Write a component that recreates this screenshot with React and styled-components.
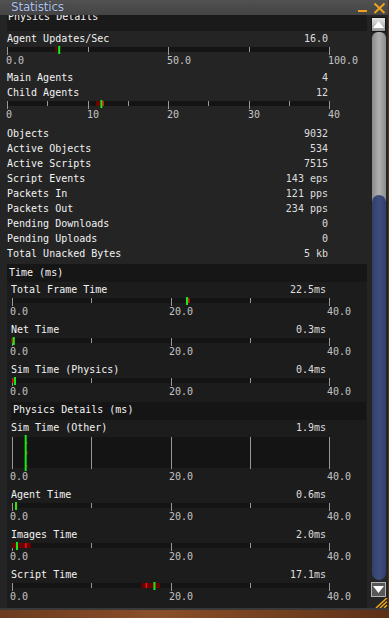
import React from 'react';
import styled, { createGlobalStyle } from 'styled-components';

const GlobalStyle = createGlobalStyle`
  html, body {
    margin: 0;
    padding: 0;
  }
  body {
    width: 389px;
    height: 618px;
    overflow: hidden;
    background: linear-gradient(90deg, #6b3b1f, #8a4e2a 40%, #74401f 70%, #5e3018);
    font-family: 'DejaVu Sans Mono', 'Liberation Mono', monospace;
    font-size: 10px;
    color: #f0f0f0;
  }
`;

// layout of a stat bar, depends on the section it sits in
const topLayout = { labelLeft: 0, graphLeft: 0, width: 322, valueRight: 39, shift: -1, gap: 3 };
const timeLayout = { labelLeft: 4, graphLeft: 5, width: 317, valueRight: 41, shift: -2, gap: 4 };

const timeScale = { max: 40, step: 10, major: 20, labels: [0, 20, 40], fmt: (v) => v.toFixed(1) };

const counters = [
  ['Objects', '9032'],
  ['Active Objects', '534'],
  ['Active Scripts', '7515'],
  ['Script Events', '143 eps'],
  ['Packets In', '121 pps'],
  ['Packets Out', '234 pps'],
  ['Pending Downloads', '0'],
  ['Pending Uploads', '0'],
  ['Total Unacked Bytes', '5 kb'],
];

const timeStats = [
  { label: 'Total Frame Time', value: '22.5ms', mean: 22.2, cur: 21.95 },
  { label: 'Net Time', value: '0.3ms', mean: -0.05, cur: 0.1 },
  { label: 'Sim Time (Physics)', value: '0.4ms', mean: 0, cur: 0.25 },
];

const physicsStats = [
  { label: 'Agent Time', value: '0.6ms', range: [0.63, 0.76], cur: 0.38 },
  { label: 'Images Time', value: '2.0ms', range: [0, 2.4], mean: 1.65, cur: 0.5 },
  { label: 'Script Time', value: '17.1ms', range: [16.35, 18.7], mean: 16.85, cur: 17.85 },
];

const Window = styled.div`
  width: 388px;
  height: 610px;
  box-sizing: border-box;
  background: #242424;
  border-bottom: 2px solid #393939;
  display: flex;
  flex-direction: column;
`;

const TitleBar = styled.div`
  height: 15px;
  flex: none;
  display: flex;
  align-items: center;
  justify-content: space-between;
  padding: 0 1px 0 11px;
  background: linear-gradient(#515151, #444);
  position: relative;
  z-index: 1;
`;

const Title = styled.div`
  font-family: 'DejaVu Sans', sans-serif;
  font-size: 12px;
  letter-spacing: -0.2px;
  line-height: 15px;
  color: #b0c3ef;
  text-shadow: 0 0 1px #1a1a1a;
`;

const Controls = styled.svg`
  display: block;
`;

const Body = styled.div`
  flex: 1;
  display: flex;
  min-height: 0;
`;

const Viewport = styled.div`
  flex: 1;
  overflow: hidden;
`;

const Content = styled.div`
  margin-top: -3px;
  padding: 0 1px 0 7px;
`;

const Band = styled.div`
  height: ${(p) => p.$h}px;
  line-height: ${(p) => p.$lh}px;
  padding-left: ${(p) => p.$pad}px;
  margin: ${(p) => p.$margin || '0'};
  background: ${(p) => p.$bg || '#1a1a1a'};
  color: #f4f4f4;
  white-space: pre;
  overflow: hidden;
`;

const Rows = styled.div`
  padding-top: 2px;
`;

const Row = styled.div`
  display: flex;
  justify-content: space-between;
  height: 15px;
  line-height: 15px;
  padding-right: 39px;
`;

const Label = styled.span`
  color: #f2f2f2;
  white-space: pre;
`;

const Value = styled.span`
  color: #dedede;
  white-space: pre;
`;

const StatBlock = styled.div`
  margin-bottom: ${(p) => p.$gap}px;
`;

const StatHead = styled.div`
  display: flex;
  justify-content: space-between;
  height: 16px;
  line-height: 16px;
  padding: 0 ${(p) => p.$right}px 0 ${(p) => p.$left}px;
`;

const GraphSvg = styled.svg`
  display: block;
  overflow: visible;
  margin-left: ${(p) => p.$left}px;
`;

const Scale = styled.div`
  position: relative;
  height: 12px;
  line-height: 12px;
  margin-left: ${(p) => p.$left}px;
`;

const ScaleMark = styled.span`
  position: absolute;
  top: 0;
  color: #c4c4c4;
  white-space: nowrap;
`;

const TimeSection = styled.div`
  margin-top: 3px;
  background: #1c1c1c;
  padding-bottom: 20px;
`;

const ScrollBar = styled.div`
  width: 20px;
  flex: none;
  display: flex;
  flex-direction: column;
  align-items: flex-end;
  padding: 2px 2px 0 0;
  box-sizing: border-box;
`;

const ArrowButton = styled.div`
  width: 15px;
  height: 15px;
  flex: none;
  box-sizing: border-box;
  display: flex;
  align-items: center;
  justify-content: center;
  margin-top: ${(p) => (p.$down ? 2 : 0)}px;
  border: 1px solid ${(p) => (p.$down ? '#b4b4b4' : '#141414')};
  background: ${(p) => (p.$down ? '#585858' : 'linear-gradient(#e4e4e4, #9a9a9a)')};
`;

const Track = styled.div`
  width: 14px;
  flex: 1;
  display: flex;
  flex-direction: column;
`;

const TrackTop = styled.div`
  height: 170px;
  flex: none;
  border-radius: 6px 6px 0 0;
  background: linear-gradient(90deg, #8a8a8a, #b0b0b0 50%, #8c8c8c);
`;

const Thumb = styled.div`
  flex: 1;
  margin-top: -7px;
  border-radius: 7px;
  background: linear-gradient(90deg, #323f6a, #3e4c7e 50%, #33406b);
`;

const Grip = styled.svg`
  display: block;
  flex: none;
  margin: 1px -2px 0 0;
`;

const GREEN = '#12ee12';
const RED = '#e41212';
const DARK_RED = '#700000';

const Graph = ({ width, max, step, major, tall, marks, left }) => {
  const px = (v) => (v / max) * width;
  const h = tall ? 35 : 8;
  const trackTop = tall ? 1 : 0;
  const trackH = tall ? 31 : 5;
  const ticks = [];
  for (let v = 0; v <= max + 1e-6; v += step) ticks.push(v);
  return (
    <GraphSvg width={width + 2} height={h} $left={left}>
      <rect x={0} y={trackTop} width={width + 1} height={trackH} fill="#141414" />
      {ticks.map((v) => {
        const x = Math.round(px(v)) + 0.5;
        const isMajor = Math.abs(v % major) < 1e-6;
        const y2 = tall ? 33 : isMajor ? 8 : 5;
        return <line key={v} x1={x} x2={x} y1={trackTop} y2={y2} stroke="#979797" strokeWidth="1" />;
      })}
      {marks.range && (
        <rect
          x={px(marks.range[0])}
          y={trackTop}
          width={px(marks.range[1]) - px(marks.range[0])}
          height={trackH}
          fill={DARK_RED}
        />
      )}
      {marks.mean !== undefined && (
        <rect x={px(marks.mean)} y={trackTop} width={1.6} height={trackH} fill={RED} />
      )}
      {marks.dots &&
        marks.dots.map((y) => <rect key={y} x={px(marks.dotAt)} y={y} width={1} height={2} fill={RED} />)}
      <rect x={px(marks.cur)} y={-1} width={2} height={tall ? 36 : 8} fill={GREEN} />
    </GraphSvg>
  );
};

const StatBar = ({ label, value, layout, scale, marks, tall }) => (
  <StatBlock $gap={layout.gap}>
    <StatHead $left={layout.labelLeft} $right={layout.valueRight}>
      <Label>{label}</Label>
      <Value>{value}</Value>
    </StatHead>
    <Graph
      width={layout.width}
      left={layout.graphLeft}
      max={scale.max}
      step={scale.step}
      major={scale.major}
      tall={tall}
      marks={marks}
    />
    <Scale $left={layout.graphLeft}>
      {scale.labels.map((v) => (
        <ScaleMark key={v} style={{ left: Math.round((v / scale.max) * layout.width) + layout.shift }}>
          {scale.fmt(v)}
        </ScaleMark>
      ))}
    </Scale>
  </StatBlock>
);

const WindowControls = () => (
  <Controls width="30" height="15" viewBox="0 0 30 15">
    <rect x="1" y="10" width="9" height="2" fill="#eea21c" />
    <path d="M17.5 3.5 L27.5 13 M27.5 3.5 L17.5 13" stroke="#eea21c" strokeWidth="2" fill="none" />
  </Controls>
);

const App = () => (
  <>
    <GlobalStyle />
    <Window>
      <TitleBar>
        <Title>Statistics</Title>
        <WindowControls />
      </TitleBar>
      <Body>
        <Viewport>
          <Content>
            <Band $h={19} $lh={10} $pad={1}>Physics Details</Band>
            <StatBar
              label="Agent Updates/Sec"
              value="16.0"
              layout={topLayout}
              scale={{ max: 100, step: 25, major: 50, labels: [0, 50, 100], fmt: (v) => v.toFixed(1) }}
              marks={{ range: [15.0, 15.6], cur: 15.9 }}
            />
            <Row>
              <Label>Main Agents</Label>
              <Value>4</Value>
            </Row>
            <StatBar
              label="Child Agents"
              value="12"
              layout={topLayout}
              scale={{ max: 40, step: 5, major: 10, labels: [0, 10, 20, 30, 40], fmt: (v) => String(v) }}
              marks={{ range: [11.05, 12.05], mean: 11.85, cur: 11.6 }}
            />
            <Rows>
              {counters.map(([label, value]) => (
                <Row key={label}>
                  <Label>{label}</Label>
                  <Value>{value}</Value>
                </Row>
              ))}
            </Rows>
            <TimeSection>
              <Band $h={18} $lh={18} $pad={2} $bg="#161616">Time (ms)</Band>
              {timeStats.map((s) => (
                <StatBar key={s.label} label={s.label} value={s.value} layout={timeLayout} scale={timeScale} marks={s} />
              ))}
              <Band $h={18} $lh={16} $pad={2} $bg="#151515" $margin="1px 1px 0 4px">
                Physics Details (ms)
              </Band>
              <StatBar
                label="Sim Time (Other)"
                value="1.9ms"
                layout={timeLayout}
                scale={timeScale}
                tall
                marks={{ cur: 1.6, dotAt: 1.82, dots: [6, 15, 17, 29] }}
              />
              {physicsStats.map((s) => (
                <StatBar key={s.label} label={s.label} value={s.value} layout={timeLayout} scale={timeScale} marks={s} />
              ))}
            </TimeSection>
          </Content>
        </Viewport>
        <ScrollBar>
          <ArrowButton>
            <svg width="11" height="7" viewBox="0 0 11 7">
              <polygon points="5.5,0 11,7 0,7" fill="#fff" />
            </svg>
          </ArrowButton>
          <Track>
            <TrackTop />
            <Thumb />
          </Track>
          <ArrowButton $down>
            <svg width="11" height="7" viewBox="0 0 11 7">
              <polygon points="0,0 11,0 5.5,7" fill="#fff" />
            </svg>
          </ArrowButton>
          <Grip width="14" height="10" viewBox="0 0 14 10">
            <path d="M2 10 L13 0 M6 10 L13 3.5 M10 10 L13 7.2" stroke="#e9a21e" strokeWidth="1.6" fill="none" />
          </Grip>
        </ScrollBar>
      </Body>
    </Window>
  </>
);

export default App;
